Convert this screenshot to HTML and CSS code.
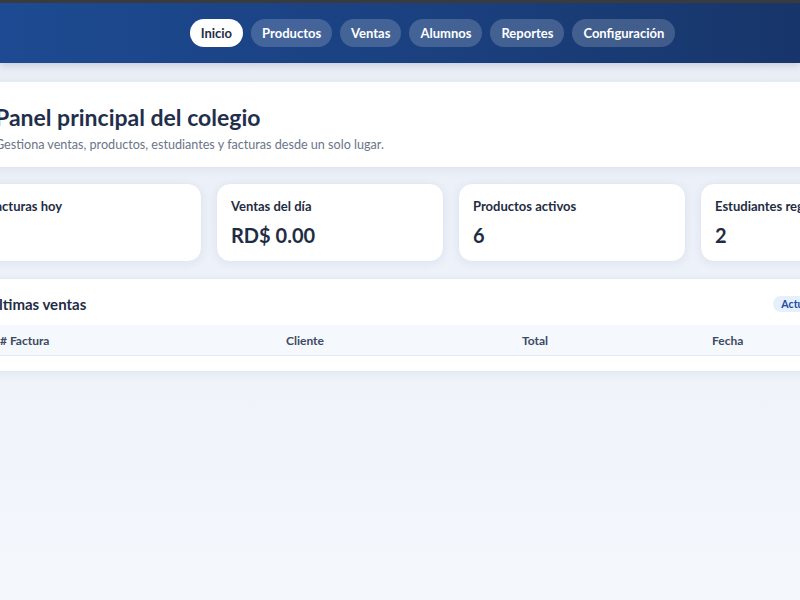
FILE: index.html
```html
<!DOCTYPE html>
<html lang="es">
<head>
    <meta charset="UTF-8">
    <title>Panel del colegio</title>
    <link rel="stylesheet" href="styles.css">
</head>
<body>
    <header class="topbar">
        <nav class="nav">
            <a class="nav-link active" href="#">Inicio</a>
            <a class="nav-link" href="#">Productos</a>
            <a class="nav-link" href="#">Ventas</a>
            <a class="nav-link" href="#">Alumnos</a>
            <a class="nav-link" href="#">Reportes</a>
            <a class="nav-link" href="#">Configuración</a>
        </nav>
    </header>

    <main class="main">
        <section class="card hero">
            <h1>Panel principal del colegio</h1>
            <p>Gestiona ventas, productos, estudiantes y facturas desde un solo lugar.</p>
        </section>

        <section class="stats">
            <div class="card stat">
                <div class="stat-label">Facturas hoy</div>
                <div class="stat-value" id="facturasHoy"></div>
            </div>
            <div class="card stat">
                <div class="stat-label">Ventas del día</div>
                <div class="stat-value">RD$ 0.00</div>
            </div>
            <div class="card stat">
                <div class="stat-label">Productos activos</div>
                <div class="stat-value">6</div>
            </div>
            <div class="card stat">
                <div class="stat-label">Estudiantes registrados</div>
                <div class="stat-value">2</div>
            </div>
        </section>

        <section class="card ventas">
            <div class="ventas-head">
                <h2>Últimas ventas</h2>
                <span class="badge">Actualizado hace 1 minuto</span>
            </div>
            <table class="tabla">
                <thead>
                    <tr>
                        <th class="col-factura"># Factura</th>
                        <th class="col-cliente">Cliente</th>
                        <th class="col-total">Total</th>
                        <th class="col-fecha">Fecha</th>
                    </tr>
                </thead>
                <tbody id="ventasBody"></tbody>
            </table>
        </section>
    </main>
</body>
</html>
```

FILE: styles.css
```css
html, body {
    margin: 0;
    padding: 0;
}
body {
    font-family: 'Lato', 'Noto Sans', sans-serif;
    background: linear-gradient(180deg, #e8edf6 0%, #f4f7fc 100%);
    min-height: 100vh;
    overflow-x: hidden;
    color: #1f2d44;
}
.topbar {
    height: 60px;
    border-top: 3px solid #3a3b3e;
    background: linear-gradient(90deg, #1d4a92 0%, #1a3f7c 60%, #17356a 100%);
    box-shadow: 0 2px 8px rgba(20, 40, 80, 0.18);
    display: flex;
    align-items: center;
    justify-content: center;
    padding-left: 65px;
}
.nav {
    display: flex;
    gap: 8px;
}
.nav-link {
    height: 28px;
    line-height: 28px;
    padding: 0 11px;
    border-radius: 14px;
    background: rgba(255, 255, 255, 0.18);
    color: #fff;
    font-size: 13px;
    font-weight: 700;
    text-decoration: none;
}
.nav-link.active {
    background: #fff;
    color: #1f2d44;
}
.main {
    width: 954px;
    margin-left: -26px;
    padding-top: 19px;
    display: flex;
    flex-direction: column;
    gap: 16px;
}
.card {
    background: #fff;
    border-radius: 14px;
    box-shadow: 0 2px 10px rgba(30, 60, 110, 0.07);
    border: 1px solid #e3e9f3;
}
.hero {
    padding: 20px 24px 15px;
    border-radius: 0;
    border: none;
    width: 1100px;
    margin-left: -60px;
    padding-left: 81px;
}
.hero h1 {
    margin: 0;
    font-size: 23px;
    line-height: 30px;
    color: #1f2f4b;
}
.hero p {
    margin: 5px 0 0;
    font-size: 12.6px;
    color: #6b7589;
}
.stats {
    display: grid;
    grid-template-columns: repeat(4, 1fr);
    gap: 14px;
}
.stat {
    padding: 13px 14px 13px;
}
.stat-label {
    font-size: 13px;
    font-weight: 700;
    line-height: 18px;
    color: #1f2d44;
}
.stat-value {
    margin-top: 7px;
    height: 26px;
    font-size: 20px;
    font-weight: 700;
    line-height: 26px;
    color: #1f2d44;
}
.ventas {
    padding: 14px 13px 15px;
}
.ventas-head {
    display: flex;
    align-items: center;
    justify-content: space-between;
    height: 22px;
    margin-bottom: 10px;
}
.ventas-head h2 {
    margin: 0;
    font-size: 15px;
    color: #1f2d44;
}
.badge {
    background: #e6effc;
    color: #1d4aa0;
    font-size: 10.6px;
    font-weight: 700;
    padding: 2px 8px;
    border-radius: 10px;
}
.tabla {
    width: 100%;
    border-collapse: collapse;
}
.tabla th {
    height: 30px;
    padding: 0 12px;
    text-align: left;
    font-size: 12px;
    font-weight: 700;
    color: #3c4a62;
    background: #f5f8fd;
    border-bottom: 1px solid #e3e9f3;
}
.col-factura { width: 262px; }
.col-cliente { width: 212px; }
.col-total { width: 166px; }
.col-fecha { width: 190px; }
```
